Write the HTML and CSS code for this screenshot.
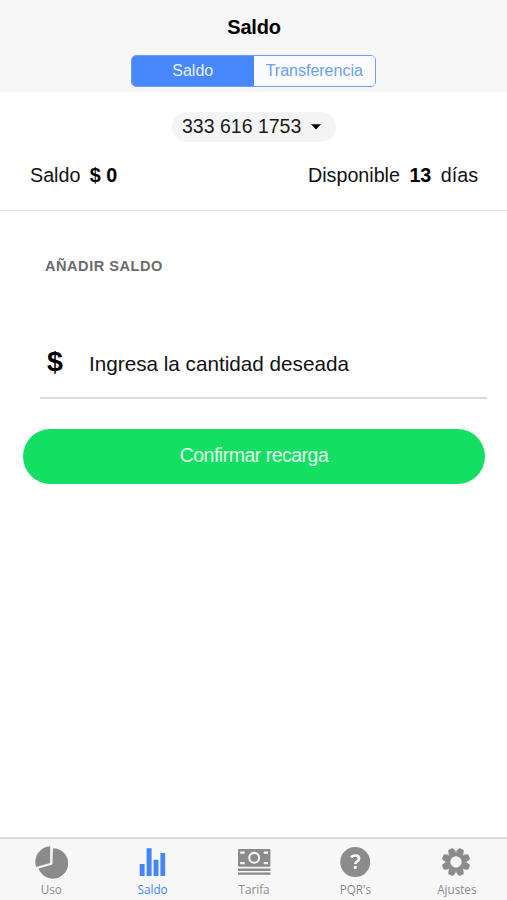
FILE: index.html
```
<!DOCTYPE html>
<html lang="es">
<head>
    <meta charset="UTF-8">
    <meta name="viewport" content="width=device-width, initial-scale=1.0">
    <title>Saldo</title>
    <link rel="stylesheet" href="styles.css">
</head>
<body>
    <header class="header">
        <h1>Saldo</h1>
        <div class="segment">
            <button class="segment-button active">Saldo</button>
            <button class="segment-button">Transferencia</button>
        </div>
    </header>

    <section class="account">
        <button class="phone">
            <span>333 616 1753</span>
            <svg class="caret" viewBox="0 0 10 6"><path d="M0 0.3h10L5 5.6z"/></svg>
        </button>
        <div class="balance">
            <p>Saldo <strong>$ 0</strong></p>
            <p class="available">Disponible <strong class="days">13</strong> días</p>
        </div>
    </section>

    <main class="content">
        <h2>AÑADIR SALDO</h2>
        <div class="amount">
            <span class="currency">$</span>
            <span class="amount-text">Ingresa la cantidad deseada</span>
        </div>
        <button class="confirm">Confirmar recarga</button>
    </main>

    <nav class="tabs">
        <a class="tab">
            <svg viewBox="0 0 34 34">
                <path d="M19 3.2A15.2 15.2 0 1 1 4.6 23.4L18.4 19.4z"/>
                <path d="M16.2 1.2v16.9L2.2 21.9A15.6 15.6 0 0 1 16.2 1.2z"/>
            </svg>
            <span>Uso</span>
        </a>
        <a class="tab active">
            <svg viewBox="0 0 34 34">
                <path d="M4.7 19h4.9v12H4.7zM11.6 3.3h5V31h-5zM18.6 14.8h4.9V31h-4.9zM25.4 8h4.8v23h-4.8z"/>
            </svg>
            <span>Saldo</span>
        </a>
        <a class="tab">
            <svg viewBox="0 0 34 34">
                <path fill-rule="evenodd" d="M2 4h30.4q1 0 1 1v15.7q0 1-1 1H2q-1 0-1-1V5q0-1 1-1zM3.2 6.5v2.3h4.5V6.5zM26.7 6.5v2.3h4.3V6.5zM3.2 17v2.3h4.5V17zM26.7 17v2.3h4.3V17zM17.2 6.8a6 6 0 1 0 0 12a6 6 0 1 0 0-12zM17.2 8.9a3.9 3.9 0 1 1 0 7.8a3.9 3.9 0 1 1 0-7.8z"/>
                <path d="M1 23.6h32.4v2.3H1zM1 27.5h32.4v2.3H1z"/>
            </svg>
            <span>Tarifa</span>
        </a>
        <a class="tab">
            <svg viewBox="0 0 34 34">
                <circle cx="17.2" cy="17.1" r="15"/>
                <path class="mark" d="M13.5 12.7q.6-2.2 3.9-2.2q3.7 0 3.7 3q0 1.8-2.1 2.9q-1.6.9-1.6 2.7"/>
                <circle class="dot" cx="17.3" cy="22.4" r="1.6"/>
            </svg>
            <span>PQR's</span>
        </a>
        <a class="tab">
            <svg viewBox="-17 -17 34 34">
                <g class="gear">
                    <circle r="9.8"/>
                    <path id="tooth" d="M-1.6-14.2h3.2q1 0 1.3 1l1 3.6L0-7-3.9-9.6l1-3.6q.3-1 1.3-1z" transform="rotate(22.5)"/>
                    <use href="#tooth" transform="rotate(45)"/>
                    <use href="#tooth" transform="rotate(90)"/>
                    <use href="#tooth" transform="rotate(135)"/>
                    <use href="#tooth" transform="rotate(180)"/>
                    <use href="#tooth" transform="rotate(225)"/>
                    <use href="#tooth" transform="rotate(270)"/>
                    <use href="#tooth" transform="rotate(315)"/>
                </g>
                <circle class="hole" r="5.7"/>
            </svg>
            <span>Ajustes</span>
        </a>
    </nav>
</body>
</html>
```
FILE: styles.css
```
* {
    margin: 0;
    padding: 0;
    box-sizing: border-box;
}
body {
    height: 900px;
    display: flex;
    flex-direction: column;
    background-color: #fff;
    color: #111;
    font-family: "Liberation Sans", Arial, sans-serif;
    font-size: 20px;
}
button {
    border: none;
    font-family: inherit;
    cursor: pointer;
}
.header {
    height: 92px;
    padding-top: 15px;
    background-color: #f7f7f7;
    display: flex;
    flex-direction: column;
    align-items: center;
}
.header h1 {
    padding-left: 1px;
    font-size: 20px;
    line-height: 24px;
    letter-spacing: -0.2px;
    color: #000;
}
.segment {
    width: 245px;
    height: 32px;
    margin-top: 15.5px;
    display: flex;
    border: 1.5px solid #6b9df8;
    border-radius: 5px;
    overflow: hidden;
}
.segment-button {
    flex: 1;
    padding-top: 1px;
    background-color: #fafbfd;
    color: #6b9df8;
    font-size: 16px;
}
.segment-button.active {
    background-color: #4788ff;
    color: #e6f0ff;
}
.account {
    height: 119px;
    padding: 20px 29px 0 30px;
    border-bottom: 1.5px solid #e2e2e2;
}
.phone {
    width: 164px;
    height: 30px;
    margin: 0 auto;
    padding-left: 10px;
    display: flex;
    align-items: center;
    gap: 10px;
    border-radius: 15px;
    background-color: #f4f4f4;
    color: #1a1a1a;
    font-size: 19.5px;
    line-height: 28px;
}
.phone span {
    padding-bottom: 2px;
    white-space: nowrap;
}
.caret {
    width: 10px;
    height: 6px;
    fill: #000;
}
.balance {
    margin-top: 21px;
    display: flex;
    justify-content: space-between;
    font-size: 19.7px;
    line-height: 24px;
}
.balance strong {
    margin-left: 4px;
    color: #000;
}
.balance .days {
    margin-right: 4px;
}
.content {
    flex: 1;
    padding: 45px 20px 0 23px;
}
.content h2 {
    padding-left: 22px;
    color: #6b6b6b;
    font-size: 14.6px;
    line-height: 20px;
    letter-spacing: 0.5px;
}
.amount {
    height: 58px;
    margin: 65px 0 0 17px;
    padding-left: 7px;
    display: flex;
    border-bottom: 2px solid #dadada;
}
.currency {
    width: 42px;
    color: #000;
    font-size: 28.5px;
    font-weight: bold;
    line-height: 41px;
}
.amount-text {
    font-size: 20.7px;
    line-height: 45px;
}
.confirm {
    width: 462px;
    height: 55px;
    margin-top: 29.5px;
    padding-bottom: 2px;
    display: block;
    border-radius: 28px;
    background-color: #13df63;
    color: #e0ffe9;
    font-size: 19.5px;
    letter-spacing: -0.5px;
}
.tabs {
    height: 63px;
    display: flex;
    border-top: 2px solid #d9d9d9;
    background-color: #f7f7f7;
}
.tab {
    flex: 1;
    padding-top: 6px;
    display: flex;
    flex-direction: column;
    align-items: center;
    color: #8b8b8b;
    font-family: "Open Sans", sans-serif;
    font-size: 11.7px;
    line-height: 21px;
}
.tab span {
    padding-left: 1px;
}
.tab.active {
    color: #4585fa;
}
.tab svg {
    width: 34px;
    height: 34px;
    fill: currentColor;
}
.tab .mark {
    fill: none;
    stroke: #f7f7f7;
    stroke-width: 2.7;
}
.tab .dot,
.tab .hole {
    fill: #f7f7f7;
}
```
